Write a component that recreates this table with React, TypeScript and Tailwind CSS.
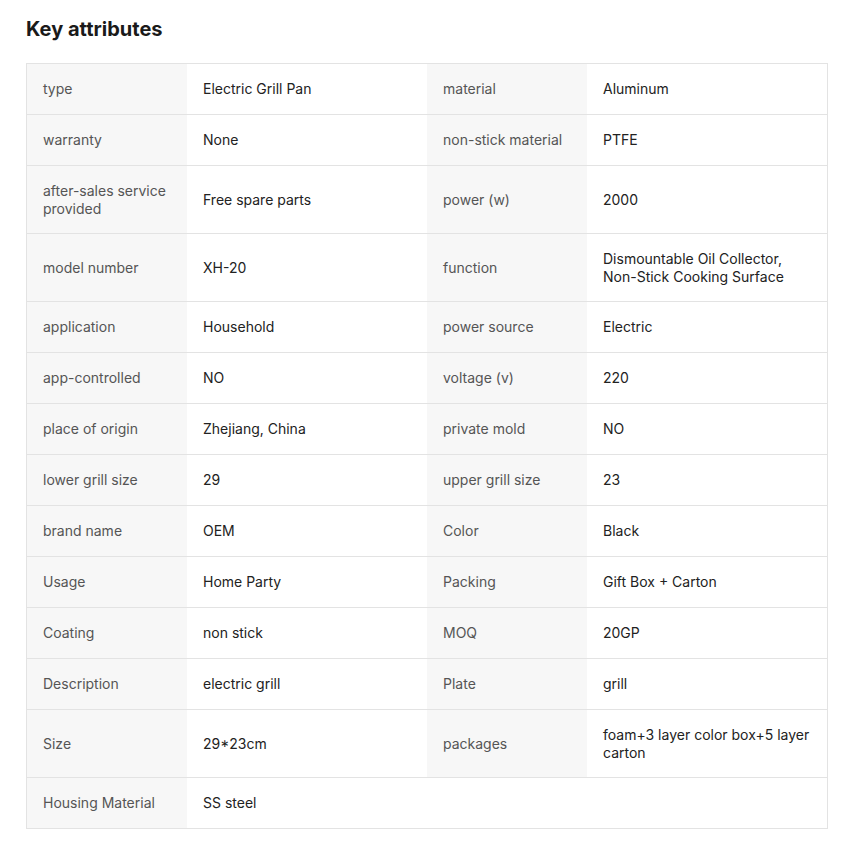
const rows: [string, string, string?, string?][] = [
  ['type', 'Electric Grill Pan', 'material', 'Aluminum'],
  ['warranty', 'None', 'non-stick material', 'PTFE'],
  ['after-sales service provided', 'Free spare parts', 'power (w)', '2000'],
  ['model number', 'XH-20', 'function', 'Dismountable Oil Collector, Non-Stick Cooking Surface'],
  ['application', 'Household', 'power source', 'Electric'],
  ['app-controlled', 'NO', 'voltage (v)', '220'],
  ['place of origin', 'Zhejiang, China', 'private mold', 'NO'],
  ['lower grill size', '29', 'upper grill size', '23'],
  ['brand name', 'OEM', 'Color', 'Black'],
  ['Usage', 'Home Party', 'Packing', 'Gift Box + Carton'],
  ['Coating', 'non stick', 'MOQ', '20GP'],
  ['Description', 'electric grill', 'Plate', 'grill'],
  ['Size', '29*23cm', 'packages', 'foam+3 layer color box+5 layer carton'],
  ['Housing Material', 'SS steel'],
];

function Cell({ text, label }: { text?: string; label?: boolean }) {
  const bg = label && text ? 'bg-[#f7f7f7] text-[#555555]' : 'bg-white text-[#222222]';
  return (
    <div className={`flex items-center min-h-[50px] px-4 py-[15.5px] ${bg}`}>
      <span>{text}</span>
    </div>
  );
}

export default function App() {
  return (
    <div className="min-h-screen bg-white pt-[15px] px-[26px] font-['Inter',sans-serif]">
      <h2 className="text-[20px] leading-[28px] font-bold text-[#1a1a1a] mb-[20px]">Key attributes</h2>
      <div className="w-[802px] border border-[#e3e3e3] text-[14px] leading-[18px]">
        {rows.map((r, i) => (
          <div
            key={i}
            className={`grid grid-cols-[160px_240px_160px_240px] ${i > 0 ? 'border-t border-[#e3e3e3]' : ''}`}
          >
            <Cell text={r[0]} label />
            <Cell text={r[1]} />
            <Cell text={r[2]} label />
            <Cell text={r[3]} />
          </div>
        ))}
      </div>
    </div>
  );
}
